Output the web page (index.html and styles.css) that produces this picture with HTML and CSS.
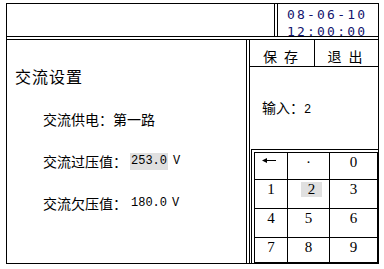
FILE: index.html
```html
<!DOCTYPE html>
<html>
<head>
<meta charset="utf-8">
<link rel="stylesheet" href="styles.css">
</head>
<body>
<div class="screen">
  <div class="header">
    <div class="header-fill"></div>
    <div class="clock">
      <div class="clock-inner">
        <div>08-06-10</div>
        <div>12:00:00</div>
      </div>
    </div>
  </div>
  <div class="main">
    <div class="left">
      <div class="title">交流设置</div>
      <div class="item">交流供电：第一路</div>
      <div class="item">交流过压值：<span class="val sel">253.0</span><span class="val unit">V</span></div>
      <div class="item">交流欠压值：<span class="val num">180.0</span><span class="val unit">V</span></div>
    </div>
    <div class="right">
      <div class="btns">
        <div class="btn save">保存</div>
        <div class="btn quit">退出</div>
      </div>
      <div class="input">输入：<span class="val">2</span></div>
      <div class="pad-outer">
        <div class="pad">
          <div class="key"><svg class="arrow" width="14" height="7" viewBox="0 0 14 7"><path d="M0 3.5 L5 1 L5 6 Z" fill="#000"/><rect x="4" y="3" width="10" height="1" fill="#000"/></svg></div>
          <div class="key">·</div>
          <div class="key">0</div>
          <div class="key">1</div>
          <div class="key"><span class="hl">2</span></div>
          <div class="key">3</div>
          <div class="key">4</div>
          <div class="key">5</div>
          <div class="key">6</div>
          <div class="key">7</div>
          <div class="key">8</div>
          <div class="key">9</div>
        </div>
      </div>
    </div>
  </div>
</div>
</body>
</html>
```
FILE: styles.css
```css
* { box-sizing: border-box; }
html, body { margin: 0; padding: 0; background: #fff; }
body {
  width: 384px;
  height: 269px;
  overflow: hidden;
  font-family: "Noto Sans CJK SC", sans-serif;
  color: #000;
}
.screen {
  margin: 3px 0 0 6px;
  width: 373px;
  height: 261px;
  border: 1px solid #000;
  display: flex;
  flex-direction: column;
}
.header {
  height: 33px;
  border-bottom: 1px solid #000;
  display: flex;
  flex-shrink: 0;
}
.header-fill { flex: 1; }
.clock {
  width: 104px;
  border-left: 1px solid #000;
  padding-left: 2px;
}
.clock-inner {
  height: 100%;
  border-left: 1px solid #000;
  padding: 2px 0 0 9px;
  font-family: "DejaVu Sans Mono", monospace;
  font-size: 13px;
  line-height: 17px;
  letter-spacing: 2.2px;
  color: #14146e;
  white-space: nowrap;
}
.main {
  flex: 1;
  margin-top: 2px;
  border-top: 1px solid #000;
  display: flex;
  min-height: 0;
}
.left {
  width: 240px;
  border-right: 1px solid #000;
  padding: 27px 0 0 8px;
}
.title {
  font-size: 16px;
  line-height: 18px;
  height: 18px;
  letter-spacing: 1px;
}
.item {
  margin: 26px 0 0 28px;
  font-size: 14px;
  line-height: 16px;
  height: 16px;
  display: flex;
  align-items: center;
  white-space: nowrap;
}
.val {
  font-family: "Liberation Mono", monospace;
  font-size: 12px;
}
.sel {
  background: #e0e0e0;
  line-height: 17px;
  padding: 0 1px;
  margin-left: 3px;
}
.num { margin-left: 4px; }
.unit { margin-left: 5px; }
.right {
  flex: 1;
  margin-left: 2px;
  border-left: 1px solid #000;
  display: flex;
  flex-direction: column;
}
.btns {
  display: flex;
  height: 27px;
  border-bottom: 1px solid #000;
  flex-shrink: 0;
}
.btn {
  font-size: 14px;
  line-height: 16px;
  padding: 8px 0 0 4px;
  text-align: center;
  letter-spacing: 7px;
  white-space: nowrap;
}
.save {
  width: 65px;
  border-right: 1px solid #000;
}
.quit { flex: 1; }
.input {
  margin-top: 32px;
  padding-left: 12px;
  font-size: 14px;
  line-height: 16px;
}
.pad-outer {
  margin-top: auto;
  margin-left: 1px;
  border-top: 1px solid #000;
  border-left: 1px solid #000;
  padding: 2px 0 0 2px;
}
.pad {
  border-top: 1px solid #000;
  border-left: 1px solid #000;
  display: grid;
  grid-template-columns: 33px 42px 48px;
  grid-template-rows: 27px 29px 29px 25px;
}
.key {
  border-right: 1px solid #000;
  border-bottom: 1px solid #000;
  text-align: center;
  font-family: "Liberation Serif", serif;
  font-size: 15px;
  line-height: 17px;
  padding-top: 1px;
}
.arrow {
  display: block;
  margin: 3px 0 0 7px;
}
.hl {
  display: inline-block;
  background: #e0e0e0;
  padding: 0 7px;
  line-height: 15px;
  margin-left: 6px;
}
```
